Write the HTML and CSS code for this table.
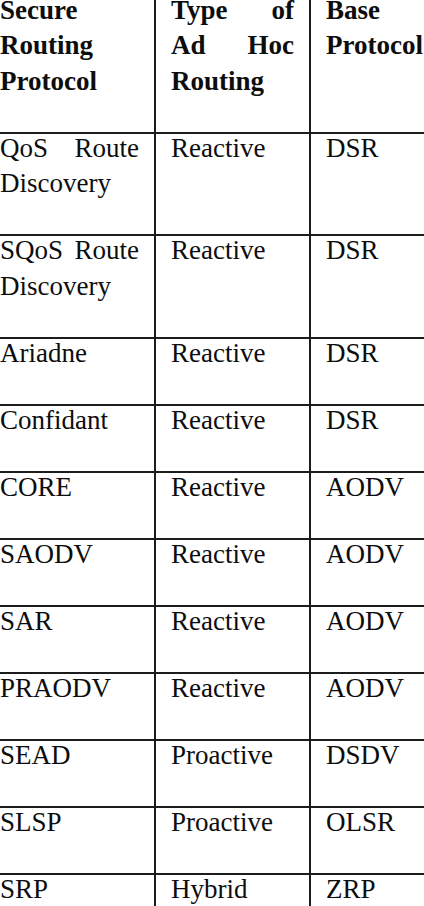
FILE: index.html
```html
<!DOCTYPE html>
<html lang="en">
<head>
<meta charset="utf-8">
<title>Secure Routing Protocols</title>
<link rel="stylesheet" href="styles.css">
</head>
<body>
<table class="proto-table">
  <colgroup>
    <col class="c1">
    <col class="c2">
    <col class="c3">
  </colgroup>
  <thead>
    <tr>
      <th><div class="cell">Secure Routing Protocol</div></th>
      <th><div class="cell">Type of Ad Hoc Routing</div></th>
      <th><div class="cell">Base Protocol</div></th>
    </tr>
  </thead>
  <tbody>
    <tr><td><div class="cell">QoS Route Discovery</div></td><td><div class="cell">Reactive</div></td><td><div class="cell">DSR</div></td></tr>
    <tr><td><div class="cell">SQoS Route Discovery</div></td><td><div class="cell">Reactive</div></td><td><div class="cell">DSR</div></td></tr>
    <tr><td><div class="cell">Ariadne</div></td><td><div class="cell">Reactive</div></td><td><div class="cell">DSR</div></td></tr>
    <tr><td><div class="cell">Confidant</div></td><td><div class="cell">Reactive</div></td><td><div class="cell">DSR</div></td></tr>
    <tr><td><div class="cell">CORE</div></td><td><div class="cell">Reactive</div></td><td><div class="cell">AODV</div></td></tr>
    <tr><td><div class="cell">SAODV</div></td><td><div class="cell">Reactive</div></td><td><div class="cell">AODV</div></td></tr>
    <tr><td><div class="cell">SAR</div></td><td><div class="cell">Reactive</div></td><td><div class="cell">AODV</div></td></tr>
    <tr><td><div class="cell">PRAODV</div></td><td><div class="cell">Reactive</div></td><td><div class="cell">AODV</div></td></tr>
    <tr><td><div class="cell">SEAD</div></td><td><div class="cell">Proactive</div></td><td><div class="cell">DSDV</div></td></tr>
    <tr><td><div class="cell">SLSP</div></td><td><div class="cell">Proactive</div></td><td><div class="cell">OLSR</div></td></tr>
    <tr><td><div class="cell">SRP</div></td><td><div class="cell">Hybrid</div></td><td><div class="cell">ZRP</div></td></tr>
  </tbody>
</table>
</body>
</html>
```

FILE: styles.css
```css
html, body {
  margin: 0;
  padding: 0;
  overflow: hidden;
  background: #ffffff;
}

body {
  width: 424px;
  height: 906px;
  font-family: "Liberation Serif", "Times New Roman", serif;
  color: #0d0d0d;
}

.proto-table {
  border-collapse: collapse;
  table-layout: fixed;
  width: 476px;
  margin: -6.5px 0 0 -17px;
  font-size: 27px;
  line-height: 35.5px;
}

.c1 { width: 171px; }
.c2 { width: 155px; }
.c3 { width: 150px; }

.proto-table th,
.proto-table td {
  border: 2px solid #1c1c1c;
  padding: 0 15px 32.5px 15px;
  vertical-align: top;
  text-align: justify;
}

.proto-table th {
  font-weight: bold;
}

.proto-table td {
  font-weight: normal;
}

.cell {
  margin-top: -3px;
}
```
